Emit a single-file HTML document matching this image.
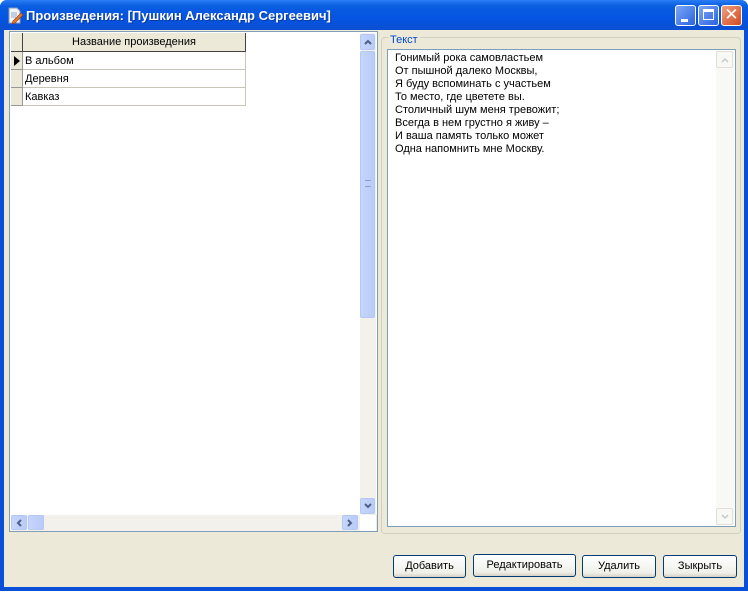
<!DOCTYPE html>
<html><head><meta charset="utf-8"><style>
*{margin:0;padding:0;box-sizing:border-box}
body{width:748px;height:593px;background:#fff;position:relative;overflow:hidden;font-family:"Liberation Sans","DejaVu Sans",sans-serif;font-size:11px;color:#000}
.a{position:absolute}
.btn{position:absolute;height:23px;border:1px solid #003c74;border-radius:3px;background:linear-gradient(#fff,#f0f0ea 80%,#d6d0c5);text-align:center;line-height:21px;font-size:11px}
.sb{position:absolute;border:1px solid #b4c8f6;border-radius:2px;background:linear-gradient(90deg,#c5d5fc,#b9cbf7);}
.cell{position:absolute;border-right:1px solid #c8c4b8;border-bottom:1px solid #c8c4b8;}
.sb svg{position:absolute;left:3px;top:3px}
</style></head><body>
<div class="a" style="left:0;top:0;width:748px;height:591px;background:#0a4fd8;border-radius:7px 7px 0 0"></div>
<div class="a" style="left:0;top:0;width:748px;height:30px;border-radius:7px 7px 0 0;background:linear-gradient(#2a7df5,#0a5ee0 20%,#0554e3 60%,#0a4fd0)"></div>
<div class="a" style="left:4px;top:30px;width:740px;height:557px;background:#ece9d8"></div>
<svg class="a" style="left:7px;top:7px" width="16" height="17"><path d="M2 1h8l3 3v12H2z" fill="#f4f4f4" stroke="#8a9ab8"/><path d="M4 6h6M4 8h6M4 10h5" stroke="#8fa8d0"/><path d="M6 14l8-8 2 2-8 8-3 1z" fill="#e07a30" stroke="#a04010" stroke-width=".7"/></svg>
<div class="a" style="left:26px;top:8px;color:#fff;font-weight:bold;font-size:13px;text-shadow:1px 1px #0a3aa0">Произведения: [Пушкин Александр Сергеевич]</div>
<div class="a" style="left:675px;top:5px;width:21px;height:21px;border:1px solid #fff;border-radius:3px;background:linear-gradient(135deg,#7ea6f5,#2a63e0)"><div class="a" style="left:5px;top:13px;width:7px;height:3px;background:#fff"></div></div>
<div class="a" style="left:698px;top:5px;width:21px;height:21px;border:1px solid #fff;border-radius:3px;background:linear-gradient(135deg,#7ea6f5,#2a63e0)"><div class="a" style="left:4px;top:3px;width:11px;height:11px;border:1px solid #fff;border-top-width:3px"></div></div>
<div class="a" style="left:721px;top:5px;width:21px;height:21px;border:1px solid #fff;border-radius:3px;background:linear-gradient(135deg,#f0a080,#d24a20);color:#fff;font-size:17px;line-height:18px;text-align:center;font-weight:bold">✕</div>
<div class="a" style="left:9px;top:31px;width:369px;height:501px;border:1px solid #7f9db9;background:#fff"></div>
<div class="a" style="left:11px;top:33px;width:12px;height:19px;background:#ece9d8;border-right:1px solid #444;border-bottom:1px solid #444"></div>
<div class="a" style="left:23px;top:33px;width:223px;height:19px;background:#ece9d8;border-right:1px solid #444;border-bottom:1px solid #444;text-align:center;line-height:19px">Название произведения</div>
<div class="a" style="left:11px;top:52px;width:12px;height:18px;background:#ece9d8;border-right:1px solid #999;border-bottom:1px solid #999"></div>
<div class="a" style="left:11px;top:70px;width:12px;height:18px;background:#ece9d8;border-right:1px solid #999;border-bottom:1px solid #999"></div>
<div class="a" style="left:11px;top:88px;width:12px;height:18px;background:#ece9d8;border-right:1px solid #999;border-bottom:1px solid #999"></div>
<svg class="a" style="left:13px;top:55px" width="8" height="12"><path d="M1 1l6 5-6 5z" fill="#000"/></svg>
<div class="cell" style="left:23px;top:52px;width:223px;height:18px;padding-left:2px;line-height:18px">В альбом</div>
<div class="cell" style="left:23px;top:70px;width:223px;height:18px;padding-left:2px;line-height:18px">Деревня</div>
<div class="cell" style="left:23px;top:88px;width:223px;height:18px;padding-left:2px;line-height:18px">Кавказ</div>
<div class="a" style="left:360px;top:33px;width:16px;height:482px;background:#f3f1ec"></div>
<div class="sb" style="left:360px;top:34px;width:15px;height:16px"><svg width="8" height="8"><path d="M1 6l3-3 3 3" stroke="#4d6185" stroke-width="2" fill="none"/></svg></div>
<div class="sb" style="left:360px;top:51px;width:15px;height:267px"><div class="a" style="left:4px;top:128px;width:6px;height:7px;border-top:1px solid #8aa0d8;border-bottom:1px solid #8aa0d8"></div></div>
<div class="sb" style="left:360px;top:498px;width:15px;height:16px"><svg width="8" height="8"><path d="M1 2l3 3 3-3" stroke="#4d6185" stroke-width="2" fill="none"/></svg></div>
<div class="a" style="left:11px;top:515px;width:349px;height:16px;background:#f3f1ec"></div>
<div class="sb" style="left:11px;top:515px;width:16px;height:15px"><svg width="8" height="8"><path d="M6 1l-3 3 3 3" stroke="#4d6185" stroke-width="2" fill="none"/></svg></div>
<div class="sb" style="left:28px;top:515px;width:16px;height:15px"></div>
<div class="sb" style="left:342px;top:515px;width:16px;height:15px"><svg width="8" height="8"><path d="M2 1l3 3-3 3" stroke="#4d6185" stroke-width="2" fill="none"/></svg></div>
<div class="a" style="left:376px;top:515px;width:1px;height:16px;background:#ece9d8"></div>
<div class="a" style="left:381px;top:37px;width:360px;height:497px;border:1px solid #d0d0bf;border-radius:4px"></div>
<div class="a" style="left:388px;top:34px;background:#ece9d8;color:#0046d5;padding:0 2px">Текст</div>
<div class="a" style="left:387px;top:49px;width:349px;height:478px;border:1px solid #7f9db9;background:#fff"></div>
<div class="a" style="left:395px;top:52px;line-height:13px;white-space:pre">Гонимый рока самовластьем
От пышной далеко Москвы,
Я буду вспоминать с участьем
То место, где цветете вы.
Столичный шум меня тревожит;
Всегда в нем грустно я живу –
И ваша память только может
Одна напомнить мне Москву.</div>
<div class="a" style="left:716px;top:51px;width:18px;height:474px;background:#f8f8f4"></div>
<div class="a" style="left:716px;top:51px;width:17px;height:17px;border:1px solid #e0dfd8;border-radius:2px"><svg class="a" style="left:4px;top:4px" width="8" height="8"><path d="M1 6l3-3 3 3" stroke="#c8c8c8" stroke-width="1.5" fill="none"/></svg></div>
<div class="a" style="left:716px;top:508px;width:17px;height:17px;border:1px solid #e0dfd8;border-radius:2px"><svg class="a" style="left:4px;top:4px" width="8" height="8"><path d="M1 2l3 3 3-3" stroke="#c8c8c8" stroke-width="1.5" fill="none"/></svg></div>
<div class="btn" style="left:393px;top:555px;width:73px">Добавить</div>
<div class="btn" style="left:473px;top:554px;width:103px">Редактировать</div>
<div class="btn" style="left:582px;top:555px;width:74px">Удалить</div>
<div class="btn" style="left:663px;top:555px;width:74px">Зыкрыть</div>
</body></html>
